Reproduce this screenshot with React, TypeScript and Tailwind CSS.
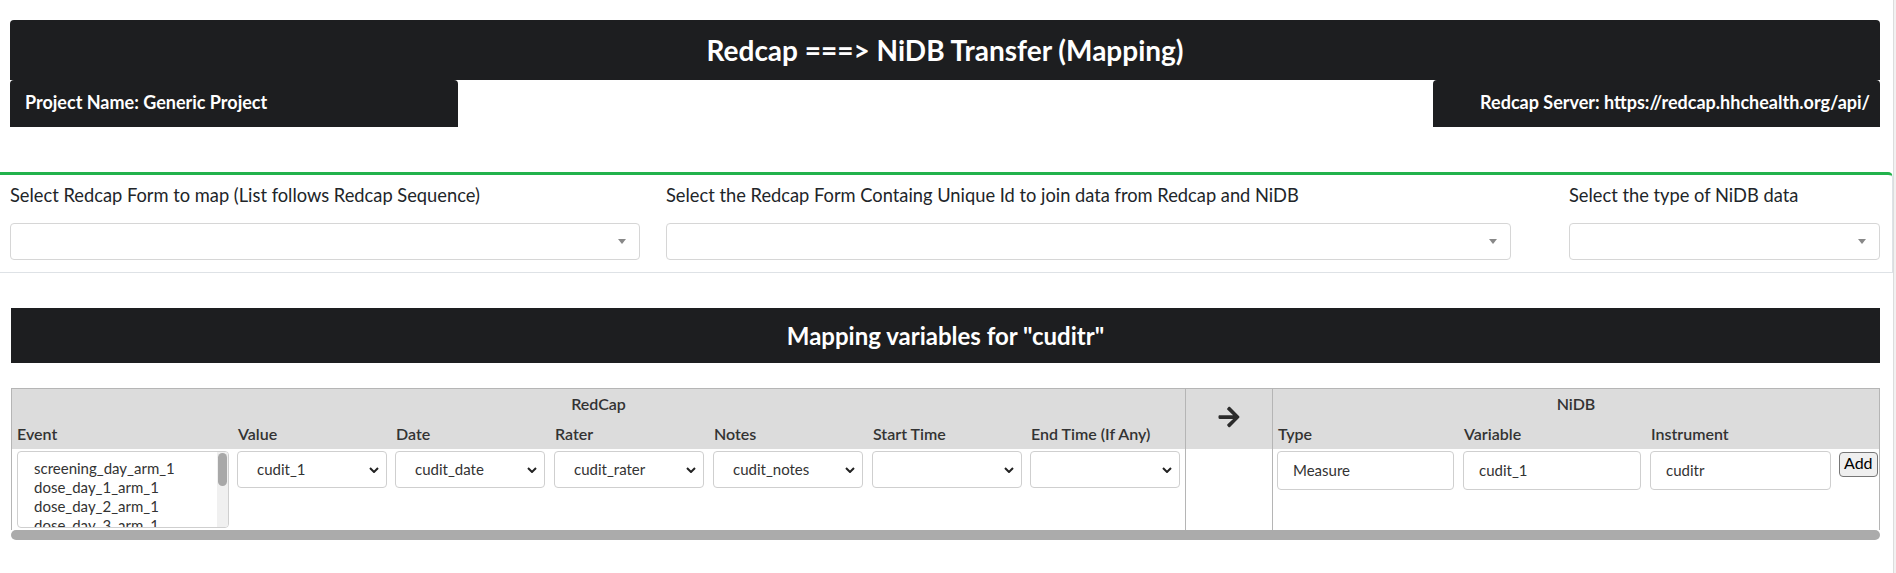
import React from "react";
import { FaArrowRight } from "react-icons/fa";

const events = [
  "screening_day_arm_1",
  "dose_day_1_arm_1",
  "dose_day_2_arm_1",
  "dose_day_3_arm_1",
  "dose_day_4_arm_1",
];

const Chevron: React.FC = () => (
  <svg width="10" height="6" viewBox="0 0 10 6" className="shrink-0">
    <path d="M1 1 L5 5 L9 1" fill="none" stroke="#222" strokeWidth="2" />
  </svg>
);

const Select2Box: React.FC<{ width: string }> = ({ width }) => (
  <div
    className={`flex items-center justify-end h-[37px] ${width} border border-[#d6d6d6] rounded-[4px] bg-white pr-[13px]`}
  >
    <div className="w-0 h-0 border-l-[4px] border-r-[4px] border-t-[5px] border-l-transparent border-r-transparent border-t-[#888]" />
  </div>
);

const NativeSelect: React.FC<{ value?: string }> = ({ value }) => (
  <div className="flex items-center justify-between w-[150px] h-[37px] border border-[#cfcfcf] rounded-[4px] bg-white pl-[19px] pr-[7px] text-[15px] text-[#333]">
    <span>{value ?? ""}</span>
    <Chevron />
  </div>
);

const TextInput: React.FC<{ value: string; width: string }> = ({ value, width }) => (
  <div
    className={`flex items-center h-[39px] ${width} border border-[#cfcfcf] rounded-[4px] bg-white pl-[15px] text-[15px] text-[#333]`}
  >
    {value}
  </div>
);

const App: React.FC = () => {
  return (
    <div className="flex w-[1896px] h-[573px] bg-white font-['Lato',sans-serif] text-[#212529] overflow-hidden">
      <div className="flex flex-col w-[1893px] pt-[20px]">
        {/* title bar */}
        <div className="ml-[10px] mr-[13px]">
          <div className="flex items-center justify-center h-[60px] bg-[#1d1e20] rounded-t-[4px]">
            <span className="text-white text-[28px] font-bold">
              Redcap ===&gt; NiDB Transfer (Mapping)
            </span>
          </div>
          <div className="flex justify-between h-[47px]">
            <div className="flex items-center w-[448px] bg-[#1d1e20] rounded-t-[4px] pl-[15px] pb-[3px] text-white text-[18px] font-bold">
              Project Name: Generic Project
            </div>
            <div className="flex items-center justify-end w-[447px] bg-[#1d1e20] rounded-t-[4px] pr-[10px] pb-[3px] text-white text-[18px] font-bold">
              Redcap Server: https://redcap.hhchealth.org/api/
            </div>
          </div>
        </div>

        {/* form selection card */}
        <div className="mt-[45px] border-t-[3px] border-t-[#22b24c] border-r border-b border-r-[#dee2e6] border-b-[#dee2e6] rounded-tr-[5px] pl-[10px] pt-[7px] pb-[12px]">
          <div className="flex">
            <div className="flex flex-col w-[630px]">
              <span className="text-[18.3px] leading-[26px]">
                Select Redcap Form to map (List follows Redcap Sequence)
              </span>
              <div className="mt-[15px]">
                <Select2Box width="w-[630px]" />
              </div>
            </div>
            <div className="flex flex-col w-[845px] ml-[26px]">
              <span className="text-[18.3px] leading-[26px]">
                Select the Redcap Form Containg Unique Id to join data from Redcap and NiDB
              </span>
              <div className="mt-[15px]">
                <Select2Box width="w-[845px]" />
              </div>
            </div>
            <div className="flex flex-col w-[311px] ml-[58px]">
              <span className="text-[18.3px] leading-[26px]">Select the type of NiDB data</span>
              <div className="mt-[15px]">
                <Select2Box width="w-[311px]" />
              </div>
            </div>
          </div>
        </div>

        {/* mapping header */}
        <div className="ml-[11px] mr-[13px] mt-[35px]">
          <div className="flex items-center justify-center h-[55px] bg-[#1d1e20]">
            <span className="text-white text-[24px] font-bold">
              Mapping variables for "cuditr"
            </span>
          </div>

          {/* mapping table */}
          <div className="mt-[25px] border border-[#b5b5b5] border-b-0 text-[#333]">
            <div className="grid grid-cols-[221px_158px_159px_159px_159px_158px_159px_88px_186px_187px_189px_44px] bg-[#dcdcdc]">
              <div className="col-span-7 h-[30px] leading-[30px] text-center text-[16px] font-semibold">
                RedCap
              </div>
              <div className="row-span-2 flex items-center justify-center pb-[4px] border-x border-[#b5b5b5] text-[#2b2b2b]">
                <FaArrowRight size={24} />
              </div>
              <div className="col-span-4 h-[30px] leading-[30px] text-center text-[16px] font-semibold">
                NiDB
              </div>
              {["Event", "Value", "Date", "Rater", "Notes", "Start Time", "End Time (If Any)"].map((h) => (
                <div key={h} className="h-[30px] leading-[30px] pl-[5px] text-[16px] font-semibold">
                  {h}
                </div>
              ))}
              {["Type", "Variable", "Instrument", ""].map((h, i) => (
                <div key={i} className="h-[30px] leading-[30px] pl-[5px] text-[16px] font-semibold">
                  {h}
                </div>
              ))}
            </div>
            <div className="grid grid-cols-[221px_158px_159px_159px_159px_158px_159px_88px_186px_187px_189px_44px] h-[81px] bg-white">
              <div className="pl-[5px] pt-[2px] overflow-hidden">
                <div className="flex w-[212px] h-[77px] border border-[#cfcfcf] rounded-[4px] overflow-hidden">
                  <div className="flex-1 flex flex-col pl-[16px] pt-[7px] text-[15px] leading-[19px] text-[#333]">
                    {events.map((e) => (
                      <span key={e}>{e}</span>
                    ))}
                  </div>
                  <div className="w-[11px] bg-[#f0f0f0] pt-[1px] px-[1px]">
                    <div className="h-[33px] rounded-full bg-[#a8a8a8]" />
                  </div>
                </div>
              </div>
              <div className="pl-[4px] pt-[2px]">
                <NativeSelect value="cudit_1" />
              </div>
              <div className="pl-[4px] pt-[2px]">
                <NativeSelect value="cudit_date" />
              </div>
              <div className="pl-[4px] pt-[2px]">
                <NativeSelect value="cudit_rater" />
              </div>
              <div className="pl-[4px] pt-[2px]">
                <NativeSelect value="cudit_notes" />
              </div>
              <div className="pl-[4px] pt-[2px]">
                <NativeSelect />
              </div>
              <div className="pl-[4px] pt-[2px]">
                <NativeSelect />
              </div>
              <div className="border-x border-[#b5b5b5]" />
              <div className="pl-[4px] pt-[2px]">
                <TextInput value="Measure" width="w-[177px]" />
              </div>
              <div className="pl-[4px] pt-[2px]">
                <TextInput value="cudit_1" width="w-[178px]" />
              </div>
              <div className="pl-[4px] pt-[2px]">
                <TextInput value="cuditr" width="w-[181px]" />
              </div>
              <div className="pl-[4px] pt-[2px]">
                <button className="h-[25px] px-[4px] pb-[2px] border border-[#767676] rounded-[4px] bg-[#efefef] text-[16px] leading-none text-black">
                  Add
                </button>
              </div>
            </div>
          </div>
          <div className="h-[10px] rounded-full bg-[#ababab]" />
        </div>
      </div>
      <div className="w-[3px] h-[573px] bg-[#f1f1f1] border-l border-[#dcdcdc]" />
    </div>
  );
};

export default App;
